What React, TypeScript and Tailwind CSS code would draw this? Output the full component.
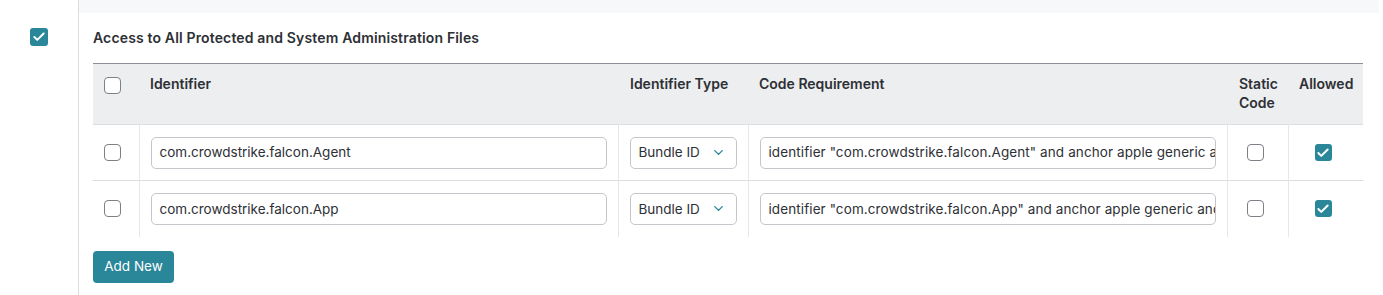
import { Check, ChevronDown } from "lucide-react";

const ROWS = [
  {
    id: "com.crowdstrike.falcon.Agent",
    req: 'identifier "com.crowdstrike.falcon.Agent" and anchor apple generic and certificate leaf[subject.OU] = X9E956P446',
  },
  {
    id: "com.crowdstrike.falcon.App",
    req: 'identifier "com.crowdstrike.falcon.App" and anchor apple generic and certificate leaf[subject.OU] = X9E956P446',
  },
];

function Box({ checked, big }: { checked?: boolean; big?: boolean }) {
  const size = big ? "w-[18px] h-[18px]" : "w-[17px] h-[17px]";
  if (checked) {
    return (
      <span className={`${size} rounded-[3px] bg-[#2a8699] flex items-center justify-center`}>
        <Check className="w-[14px] h-[14px] text-white" strokeWidth={3.4} />
      </span>
    );
  }
  return <span className={`${size} rounded-[4px] border border-[#7d8087] bg-white block`} />;
}

export default function App() {
  return (
    <div className="w-[1383px] h-[295px] bg-white flex font-['Inter',sans-serif] text-[#2d3035] overflow-hidden">
      <div className="w-[78px] shrink-0 pl-[30px] pt-[28px]">
        <Box checked big />
      </div>
      <div className="w-px bg-[#dcdde0] shrink-0" />
      <div className="flex-1 flex flex-col">
        <div className="h-[13px] w-[1300px] bg-[#f7f8fa]" />
        <div className="pl-[14px] pt-[16px] flex flex-col">
          <div className="text-[14px] font-semibold leading-[17px] h-[17px] tracking-[0.15px]">
            Access to All Protected and System Administration Files
          </div>
          <table className="mt-[17px] w-[1270px] table-fixed border-collapse text-[13.5px]">
            <colgroup>
              <col className="w-[46px]" />
              <col className="w-[479px]" />
              <col className="w-[130px]" />
              <col className="w-[479px]" />
              <col className="w-[61px]" />
              <col className="w-[75px]" />
            </colgroup>
            <thead>
              <tr className="bg-[#edeef0] border-t border-[#8b8e94] h-[61px] align-top text-left text-[14px]">
                <th className="pl-[11px] pt-[13px]">
                  <Box />
                </th>
                <th className="pl-[11px] pt-[10px] font-semibold leading-[19px]">Identifier</th>
                <th className="pl-[12px] pt-[10px] font-semibold leading-[19px]">Identifier Type</th>
                <th className="pl-[11px] pt-[10px] font-semibold leading-[19px]">Code Requirement</th>
                <th className="pl-[12px] pt-[10px] font-semibold leading-[19px]">
                  Static
                  <br />
                  Code
                </th>
                <th className="pl-[11px] pt-[10px] font-semibold leading-[19px]">Allowed</th>
              </tr>
            </thead>
            <tbody>
              {ROWS.map((r) => (
                <tr key={r.id} className="h-[56px] border-t border-[#dcdde0]">
                  <td className="pl-[11px] border-r border-[#e6e7ea]">
                    <Box />
                  </td>
                  <td className="px-[11px] border-r border-[#e6e7ea]">
                    <div className="h-[32px] rounded-[5px] border border-[#c4c6cb] px-[8px] flex items-center whitespace-nowrap overflow-hidden">
                      {r.id}
                    </div>
                  </td>
                  <td className="px-[11px] border-r border-[#e6e7ea]">
                    <div className="h-[32px] w-[107px] rounded-[5px] border border-[#c4c6cb] pl-[8px] pr-[10px] flex items-center justify-between">
                      <span>Bundle ID</span>
                      <ChevronDown className="w-[15px] h-[15px] text-[#2a8699]" strokeWidth={2.2} />
                    </div>
                  </td>
                  <td className="px-[11px] border-r border-[#e6e7ea]">
                    <div className="h-[32px] rounded-[5px] border border-[#c4c6cb] px-[8px] flex items-center whitespace-nowrap overflow-hidden tracking-[0.1px]">
                      {r.req}
                    </div>
                  </td>
                  <td className="pl-[19px] border-r border-[#e6e7ea]">
                    <Box />
                  </td>
                  <td className="pl-[26px]">
                    <Box checked />
                  </td>
                </tr>
              ))}
            </tbody>
          </table>
          <button className="mt-[14px] w-[81px] h-[32px] rounded-[4px] bg-[#2a8699] text-white text-[13.5px]">
            Add New
          </button>
        </div>
      </div>
    </div>
  );
}
